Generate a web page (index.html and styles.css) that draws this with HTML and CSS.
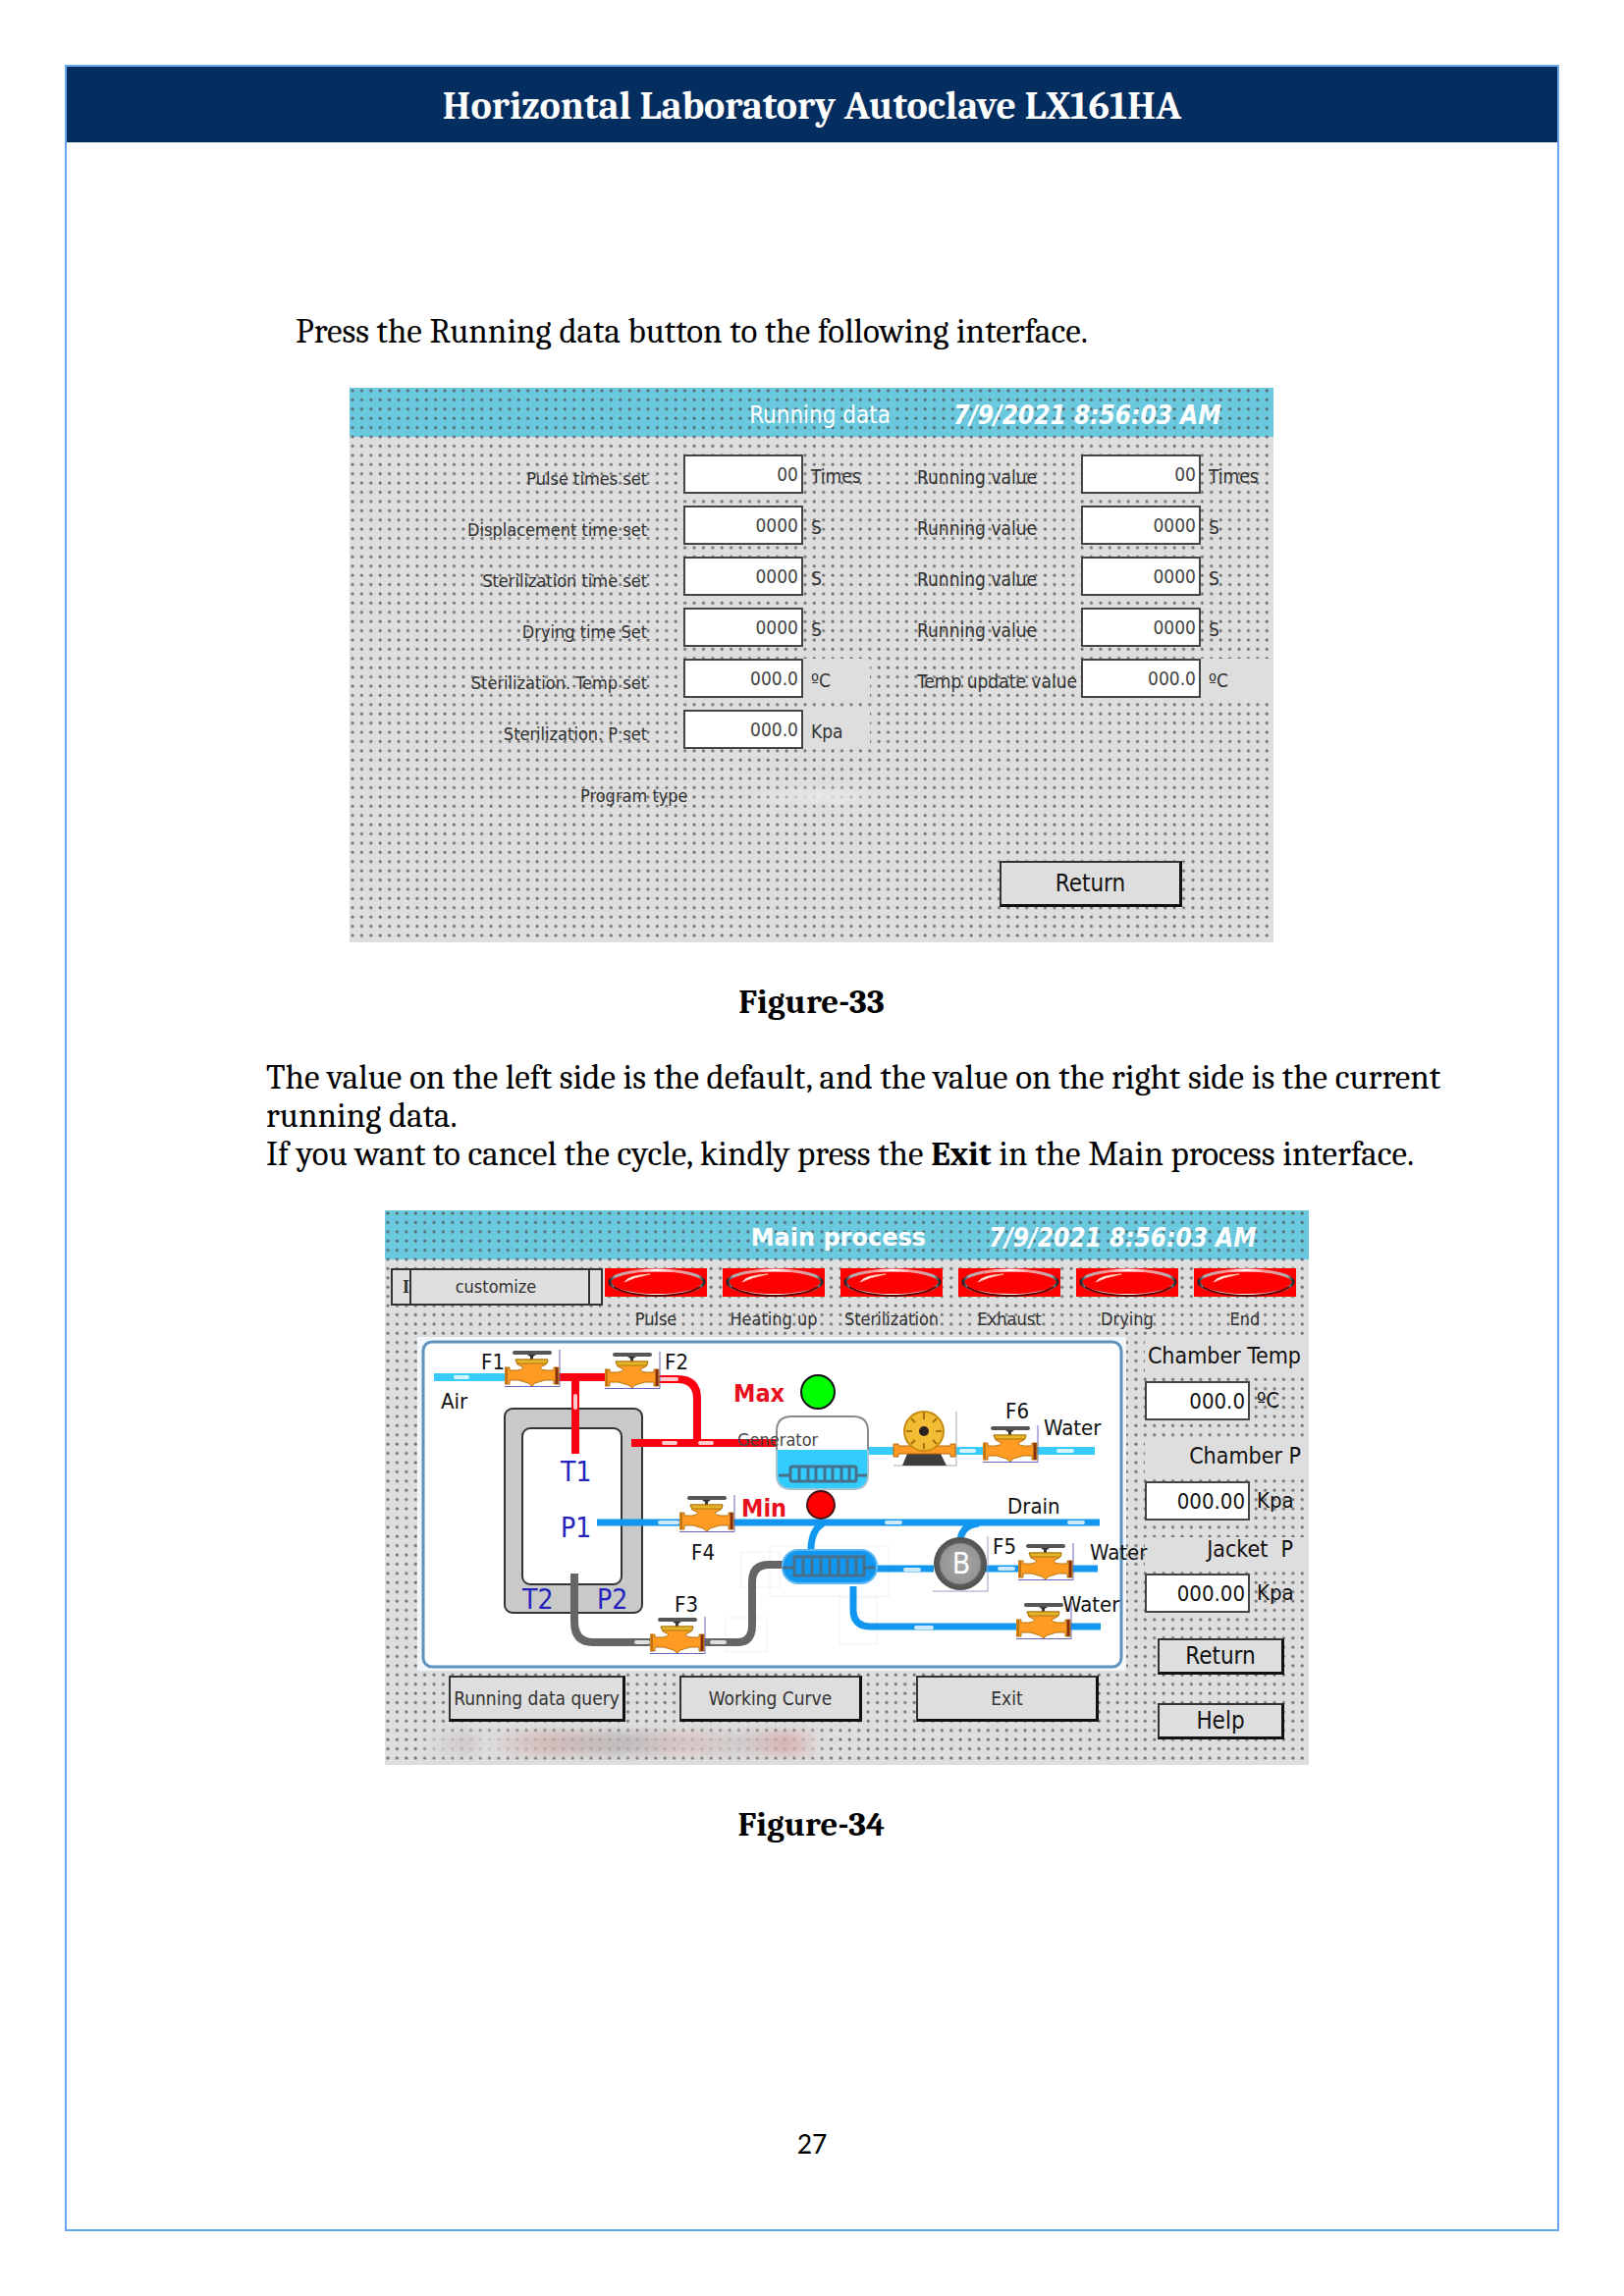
FILE: index.html
```html
<!DOCTYPE html>
<html lang="en">
<head>
  <meta charset="UTF-8">
  <title>Horizontal Laboratory Autoclave LX161HA</title>
  <link rel="stylesheet" href="styles.css">
</head>
<body>
  <div class="page">
    <header class="page-header">
      <h1>Horizontal Laboratory Autoclave LX161HA</h1>
    </header>

    <main class="content">
      <p class="intro">Press the Running data button to the following interface.</p>

      <!-- ====== Running data ====== -->
      <figure>
        <section class="screen">
          <div class="screen-title">
            <h2>Running data</h2>
            <time>7/9/2021 8:56:03 AM</time>
          </div>

          <form class="data-grid">
            <label for="pulse">Pulse times set</label>
            <input id="pulse" type="text" value="00">
            <span class="unit">Times</span>
            <label class="value-label" for="pulse-run">Running value</label>
            <input id="pulse-run" type="text" value="00" readonly>
            <span class="unit">Times</span>

            <label for="disp">Displacement time set</label>
            <input id="disp" type="text" value="0000">
            <span class="unit">S</span>
            <label class="value-label" for="disp-run">Running value</label>
            <input id="disp-run" type="text" value="0000" readonly>
            <span class="unit">S</span>

            <label for="ster">Sterilization time set</label>
            <input id="ster" type="text" value="0000">
            <span class="unit">S</span>
            <label class="value-label" for="ster-run">Running value</label>
            <input id="ster-run" type="text" value="0000" readonly>
            <span class="unit">S</span>

            <label for="dry">Drying time Set</label>
            <input id="dry" type="text" value="0000">
            <span class="unit">S</span>
            <label class="value-label" for="dry-run">Running value</label>
            <input id="dry-run" type="text" value="0000" readonly>
            <span class="unit">S</span>

            <label for="temp">Sterilization. Temp set</label>
            <input id="temp" type="text" value="000.0">
            <span class="unit solid">ºC</span>
            <label class="value-label" for="temp-run">Temp update value</label>
            <input id="temp-run" type="text" value="000.0" readonly>
            <span class="unit solid">ºC</span>

            <label for="press">Sterilization. P set</label>
            <input id="press" type="text" value="000.0">
            <span class="unit solid">Kpa</span>
          </form>

          <div class="program">
            <span>Program type</span>
            <span class="erased"></span>
          </div>
          <div class="data-actions">
            <button type="button" class="btn large">Return</button>
          </div>
        </section>
        <figcaption>Figure-33</figcaption>
      </figure>

      <p>The value on the left side is the default, and the value on the right side is the current running data.</p>
      <p>If you want to cancel the cycle, kindly press the <strong>Exit</strong> in the Main process interface.</p>

      <!-- ====== Main process ====== -->
      <figure class="shifted">
        <section class="screen">
          <div class="screen-title">
            <h2 class="bold">Main process</h2>
            <time>7/9/2021 8:56:03 AM</time>
          </div>

          <div class="status">
            <button type="button" class="custom"><span class="cursor">I</span><span class="custom-text">customize</span></button>
            <ul class="lamps">
              <li><svg class="lamp" viewBox="0 0 104 29"><use href="#lamp"/></svg>Pulse</li>
              <li><svg class="lamp" viewBox="0 0 104 29"><use href="#lamp"/></svg>Heating up</li>
              <li><svg class="lamp" viewBox="0 0 104 29"><use href="#lamp"/></svg>Sterilization</li>
              <li><svg class="lamp" viewBox="0 0 104 29"><use href="#lamp"/></svg>Exhaust</li>
              <li><svg class="lamp" viewBox="0 0 104 29"><use href="#lamp"/></svg>Drying</li>
              <li><svg class="lamp" viewBox="0 0 104 29"><use href="#lamp"/></svg>End</li>
            </ul>
          </div>

          <div class="process">
            <div class="process-left">
              <svg class="diagram" viewBox="4 2 722 340">
                <defs>
                  <linearGradient id="metal" x1="0" y1="0" x2="1" y2="0">
                    <stop offset="0" stop-color="#222"/>
                    <stop offset="0.06" stop-color="#aaa"/>
                    <stop offset="0.3" stop-color="#f99"/>
                    <stop offset="0.5" stop-color="#fff"/>
                    <stop offset="0.7" stop-color="#f99"/>
                    <stop offset="0.94" stop-color="#aaa"/>
                    <stop offset="1" stop-color="#222"/>
                  </linearGradient>
                  <radialGradient id="ball">
                    <stop offset="0" stop-color="#a8a8a8"/>
                    <stop offset="0.74" stop-color="#959595"/>
                    <stop offset="0.8" stop-color="#5c5c5c"/>
                    <stop offset="1" stop-color="#505050"/>
                  </radialGradient>
                  <symbol id="lamp" viewBox="0 0 104 29">
                    <rect width="104" height="29" fill="#fe0000"/>
                    <ellipse cx="53" cy="15" rx="49" ry="13" fill="#900000"/>
                    <ellipse cx="53" cy="14" rx="48" ry="12" fill="#fe0000" stroke="url(#metal)" stroke-width="3"/>
                    <path d="M9 19Q24 28 53 28T97 19" fill="none" stroke="#500" stroke-width="2"/>
                    <ellipse cx="53" cy="15" rx="45" ry="11" fill="#fe0000"/>
                    <path d="M20 14Q24 7 46 6Q30 9 20 14Z" fill="#fff" stroke="#ffb0a0" stroke-width="1"/>
                  </symbol>
                  <symbol id="valve" viewBox="0 0 57 39">
                    <path d="M0 37.500H56V0" fill="none" stroke="#6666c0"/>
                    <rect x="8" y="1" width="40" height="4" rx="2" fill="#555"/>
                    <path d="M23 5h9l-3 2v5h-3V7z" fill="#333"/>
                    <path d="M11 10H44L42 15L36 18Q37 21 42 21H50V18H55V35H50V31H41L31 34L28 37L24 34L14 31H5V35H0V18H5V21H13Q19 20 19 18L13 15Z" fill="#ff9a22" stroke="#b87510" stroke-width="1"/>
                    <path d="M11 10H44L43 14H13Z" fill="#e5b62b" stroke="#a9760b"/>
                    <path d="M53 18V35" stroke="#833010" stroke-width="3"/>
                    <path d="M2 18V35" stroke="#c07312" stroke-width="2"/>
                  </symbol>
                </defs>

                <rect x="4" y="2" width="722" height="340" fill="#f1f7fb"/>
                <rect x="10" y="7" width="711" height="331" rx="9" fill="#fff" stroke="#5f92bd" stroke-width="3"/>

                <g class="guide">
                  <rect x="334" y="221" width="39" height="36"/>
                  <rect x="318" y="288" width="42" height="35"/>
                  <rect x="363" y="215" width="121" height="51"/>
                  <rect x="434" y="267" width="38" height="48"/>
                </g>

                <!-- chamber and jacket -->
                <rect x="93" y="75" width="140" height="208" rx="8" fill="#c9c9c9" stroke="#333" stroke-width="2"/>
                <rect x="111" y="95" width="101" height="159" rx="8" fill="#fff" stroke="#333" stroke-width="2"/>

                <!-- air and steam -->
                <g class="pipe cyan">
                  <path d="M21 43H95M463 118H490M552 118H694"/>
                </g>
                <g class="pipe red">
                  <path d="M146 43H197M165 43V121M250 45H269Q289 45 289 65V108M222 110H371"/>
                </g>

                <!-- water and drain -->
                <g class="pipe blue">
                  <path d="M187 191H272M326 191H699M417 192Q405 199 405 219M557 208Q560 193 576 192M472 238H530M582 238H697M448 256V280Q448 297 466 297H700"/>
                </g>
                <g class="pipe gray">
                  <path d="M164 243V292Q164 313 183 313H242M294 313H330Q345 313 345 296V252Q345 234 362 234H376"/>
                </g>

                <!-- flow marks -->
                <g class="flow">
                  <path d="M43 43H55M252 45H268M165 62V74M255 110H267M292 110H304M251 191H269M227 313H239M304 313H317M482 191H496M668 191H682M501 239H515M597 238H611M512 298H528M558 118H571M657 118H671"/>
                </g>

                <use href="#valve" x="93" y="15" width="57" height="39"/>
                <use href="#valve" x="195" y="17" width="57" height="39"/>
                <use href="#valve" x="271" y="163" width="57" height="39"/>
                <use href="#valve" x="241" y="287" width="57" height="39"/>
                <use href="#valve" x="580" y="92" width="57" height="39"/>
                <use href="#valve" x="616" y="212" width="57" height="39"/>
                <use href="#valve" x="614" y="272" width="57" height="39"/>

                <!-- generator tank -->
                <path d="M370 117V98Q370 83 385 83H448Q463 83 463 98V117" fill="#fff" stroke="#8a8a8a" stroke-width="2"/>
                <path d="M370 117H463V142Q463 157 448 157H385Q370 157 370 142Z" fill="#33ccff"/>
                <path d="M370 117V142Q370 157 385 157H448Q463 157 463 142V117" fill="none" stroke="#a5c4d0" stroke-width="2"/>
                <g class="coil">
                  <rect x="384" y="134" width="67" height="15" rx="2"/>
                  <path d="M372 143H384M451 143H462M393 134V149M402 134V149M410 134V149M419 134V149M427 134V149M436 134V149M444 134V149"/>
                </g>

                <!-- pump -->
                <path d="M489 133H553V78" fill="none" stroke="#aaa"/>
                <path d="M503 121H537L543 133H498Z" fill="#3d3d3d"/>
                <path d="M489 111H494V113H547V111H552V124H547V121H494V124H489Z" fill="#ff9a22" stroke="#b06a12"/>
                <circle cx="520" cy="98" r="20" fill="#f2bd35" stroke="#c68a10" stroke-width="2"/>
                <path d="M520 79V86M520 110V116M502 98H508M532 98H538M507 85L511 89M533 85L529 89M507 111L511 107M533 111L529 107" stroke="#a5700c" stroke-width="2"/>
                <circle cx="520" cy="98" r="5" fill="#2b2020"/>

                <!-- heat exchanger -->
                <rect x="376" y="219" width="96" height="34" rx="16" fill="#1297f0" stroke="#62b8f2" stroke-width="2"/>
                <g class="coil">
                  <rect x="388" y="226" width="71" height="19"/>
                  <path d="M376 237H388M459 237H470M397 226V245M406 226V245M415 226V245M424 226V245M433 226V245M442 226V245M451 226V245"/>
                </g>

                <!-- pump B -->
                <path d="M529 261H585V205" fill="none" stroke="#9a9ac8"/>
                <circle cx="557" cy="233" r="27" fill="url(#ball)"/>
                <text class="ball-text" x="558" y="243" text-anchor="middle">B</text>

                <!-- level lamps -->
                <circle cx="412" cy="58" r="17" fill="#0f0" stroke="#111" stroke-width="2"/>
                <circle cx="415" cy="173" r="14" fill="#f00" stroke="#411" stroke-width="2"/>
                <text class="level" x="326" y="68">Max</text>
                <text class="level" x="334" y="185">Min</text>
                <text class="generator" x="330" y="113">Generator</text>

                <g class="tag">
                  <text x="69" y="35">F1</text>
                  <text x="256" y="35">F2</text>
                  <text x="266" y="282">F3</text>
                  <text x="283" y="229">F4</text>
                  <text x="590" y="223">F5</text>
                  <text x="603" y="85">F6</text>
                  <text x="28" y="75">Air</text>
                  <text x="605" y="182">Drain</text>
                  <text x="642" y="102">Water</text>
                  <text x="689" y="229">Water</text>
                  <text x="661" y="282">Water</text>
                </g>
                <g class="sensor">
                  <text x="150" y="149">T1</text>
                  <text x="150" y="206">P1</text>
                  <text x="111" y="279">T2</text>
                  <text x="187" y="279">P2</text>
                </g>
              </svg>

              <div class="process-actions">
                <button type="button" class="btn">Running data query</button>
                <button type="button" class="btn">Working Curve</button>
                <button type="button" class="btn">Exit</button>
              </div>
              <div class="smudge"></div>
            </div>

            <aside class="readings">
              <div class="reading">
                <label for="chamber-temp">Chamber Temp</label>
                <input id="chamber-temp" type="text" value="000.0" readonly><span>ºC</span>
              </div>
              <div class="reading">
                <label for="chamber-p">Chamber P</label>
                <input id="chamber-p" type="text" value="000.00" readonly><span>Kpa</span>
              </div>
              <div class="reading short">
                <label for="jacket-p">Jacket&nbsp; P</label>
                <input id="jacket-p" type="text" value="000.00" readonly><span>Kpa</span>
              </div>
              <button type="button" class="btn side">Return</button>
              <button type="button" class="btn side">Help</button>
            </aside>
          </div>
        </section>
        <figcaption>Figure-34</figcaption>
      </figure>
    </main>

    <footer class="page-number">27</footer>
  </div>
</body>
</html>
```
FILE: styles.css
```css
* {
  box-sizing: border-box;
}
body {
  margin: 0;
  padding: 66px;
  background: #fff;
  color: #000;
  font-family: Cambria, Caladea, "Liberation Serif", serif;
  font-size: 35px;
  line-height: 39px;
}
.page {
  display: flex;
  flex-direction: column;
  min-height: calc(100vh - 132px);
  border: 2px solid #66a8ee;
}
.page-header {
  padding-top: 3px;
  background: #042e60;
  color: #fff;
  text-align: center;
}
.page-header h1 {
  margin: 0;
  font-size: 40px;
  line-height: 74px;
}
.content {
  padding: 173px 100px 0 203px;
}
.content p {
  margin: 0;
}
.content .intro {
  padding-left: 30px;
}
figure {
  width: 941px;
  margin: 38px 0 38px 85px;
}
figure.shifted {
  margin-left: 121px;
}
figcaption {
  margin-top: 41px;
  text-align: center;
  font-weight: bold;
}
figure.shifted figcaption {
  padding-right: 72px;
}
.page-number {
  margin-top: auto;
  padding-bottom: 68px;
  text-align: center;
  font-family: Calibri, Carlito, "Open Sans", sans-serif;
  font-size: 30px;
}

/* ====== Screens ====== */
.screen {
  height: 565px;
  background:
    radial-gradient(circle at 3px 3px, rgba(80, 80, 80, 0.8) 1px, transparent 2px) 0 0 / calc(100% / 100) calc(100% / 60),
    linear-gradient(#6ac9de 50px, #dedede 50px);
  color: #333;
  font-family: "DejaVu Sans Condensed", "DejaVu Sans", sans-serif;
  font-size: 18px;
  line-height: 24px;
}
.screen-title {
  display: grid;
  grid-template-columns: 615px 1fr;
  align-items: center;
  height: 50px;
  padding-top: 6px;
  color: #fff;
  font-size: 24px;
}
.screen-title h2 {
  margin: 0;
  padding-right: 64px;
  text-align: right;
  font-size: 24px;
  font-weight: normal;
}
.screen-title .bold {
  font-family: "DejaVu Sans", sans-serif;
  font-weight: bold;
}
.screen-title time {
  font-size: 26px;
  font-weight: bold;
  font-style: italic;
}
.screen input {
  width: 100%;
  height: 40px;
  padding: 0 3px;
  border: 2px solid #444;
  background: #fff;
  color: #444;
  font: inherit;
  font-size: 19px;
  text-align: right;
}
.btn {
  height: 47px;
  padding: 0;
  border: 2px solid #333;
  border-right: 3px solid #111;
  border-bottom: 3px solid #111;
  background: #dedede;
  color: #333;
  font: inherit;
  font-size: 19px;
}

/* ====== Running data ====== */
.data-grid {
  display: grid;
  grid-template-columns: 340px 122px 116px 167px 122px 1fr;
  row-gap: 12px;
  padding-top: 18px;
}
.data-grid label {
  padding: 13px 37px 0 0;
  text-align: right;
}
.data-grid .value-label {
  padding: 11px 0 0;
  font-size: 19px;
  text-align: left;
}
.unit {
  padding: 10px 0 0 8px;
  font-size: 19px;
}
.unit.solid {
  margin-right: 48px;
  background: #dedede;
}
.unit.solid:nth-of-type(even) {
  margin-right: 0;
}
.program {
  display: flex;
  gap: 60px;
  padding: 36px 0 0 235px;
}
.erased {
  width: 150px;
  background: radial-gradient(closest-side, #e8e8e8, transparent);
}
.data-actions {
  display: flex;
  justify-content: flex-end;
  padding: 54px 93px 0 0;
}
.btn.large {
  width: 186px;
  color: #111;
  font-size: 24px;
}

/* ====== Main process ====== */
.status {
  display: flex;
  gap: 2px;
  height: 79px;
  padding: 9px 0 0 6px;
}
.custom {
  display: flex;
  width: 216px;
  height: 38px;
  padding: 0 11px 0 0;
  border: 2px solid #333;
  background: #dedede;
  color: #333;
  font: inherit;
}
.cursor {
  width: 17px;
  font-family: "Liberation Serif", serif;
  font-weight: bold;
  line-height: 34px;
  text-align: right;
}
.custom-text {
  flex: 1;
  padding-right: 8px;
  border: solid #333;
  border-width: 0 2px;
  line-height: 34px;
}
.lamps {
  display: grid;
  grid-template-columns: repeat(6, 104px);
  gap: 16px;
  margin: 0;
  padding: 0;
  list-style: none;
  text-align: center;
}
.lamp {
  display: block;
  width: 104px;
  height: 29px;
  margin-bottom: 11px;
}
.process {
  display: grid;
  grid-template-columns: 741px 1fr;
  padding-left: 33px;
}
/* the water label runs past the panel, over the readings */
.process-left {
  z-index: 1;
}
.diagram {
  display: block;
  width: 722px;
  height: 340px;
  overflow: visible;
}
.guide rect {
  fill: none;
  stroke: #f1f1f1;
}
.pipe path,
.flow path {
  fill: none;
}
.pipe {
  stroke-width: 7;
}
.cyan {
  stroke: #36cbf8;
  stroke-width: 8;
}
.red {
  stroke: #fa0010;
  stroke-width: 8;
}
.blue {
  stroke: #1297f0;
}
.gray {
  stroke: #666;
  stroke-width: 8;
}
.flow {
  stroke: #fff;
  stroke-width: 4;
  stroke-linecap: round;
  opacity: 0.8;
}
.coil {
  fill: none;
  stroke: #47708a;
  stroke-width: 3;
}
.tag {
  fill: #111;
  font-size: 22px;
}
.sensor {
  fill: #2323bb;
  font-size: 28px;
}
.ball-text {
  fill: #fff;
  font-size: 30px;
}
.level {
  fill: #e8101c;
  font-size: 25px;
  font-weight: bold;
}
.generator {
  fill: #444;
}
.process-actions {
  display: grid;
  grid-template-columns: 180px 186px 186px;
  gap: 55px;
  padding: 5px 0 0 32px;
}
.smudge {
  width: 400px;
  height: 24px;
  margin: 10px 0 0 10px;
  background: linear-gradient(90deg, #dedede, #cdc6c6 10%, #dedede 15%, #d0b4b2 30%, #b9b5b5 50%, #d9c0c0 65%, #cfcaca 80%, #d8a9a9 92%, #dedede);
  filter: blur(5px);
  opacity: 0.8;
}
.readings {
  color: #111;
  font-size: 22px;
}
.reading {
  display: grid;
  grid-template-columns: 107px 1fr;
  column-gap: 7px;
  padding-bottom: 17px;
}
.reading label {
  grid-column: 1 / 3;
  height: 38px;
  margin-bottom: 7px;
  padding-right: 8px;
  background: #dedede;
  font-size: 23px;
  line-height: 38px;
  text-align: right;
}
.reading.short label {
  height: 30px;
  padding-right: 16px;
  line-height: 24px;
}
.reading input {
  color: #111;
  font-size: 22px;
}
.reading span {
  align-self: center;
}
.btn.side {
  display: block;
  width: 129px;
  height: 37px;
  margin: 9px 0 29px 13px;
  color: #111;
  font-size: 24px;
}
```
